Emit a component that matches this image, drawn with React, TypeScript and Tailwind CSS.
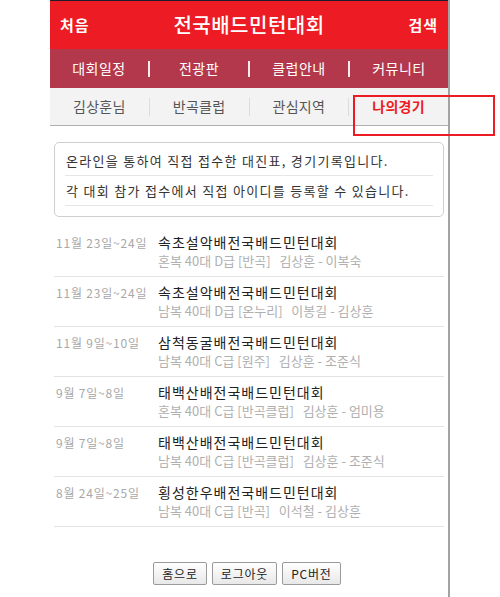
import React from "react";

const menu = ["대회일정", "전광판", "클럽안내", "커뮤니티"];
const tabs = [
  { label: "김상훈님" },
  { label: "반곡클럽" },
  { label: "관심지역" },
  { label: "나의경기", active: true },
];

const games = [
  { date: "11월 23일~24일", title: "속초설악배전국배드민턴대회", info: "혼복 40대 D급 [반곡]   김상훈 - 이복숙" },
  { date: "11월 23일~24일", title: "속초설악배전국배드민턴대회", info: "남복 40대 D급 [온누리]   이봉길 - 김상훈" },
  { date: "11월 9일~10일", title: "삼척동굴배전국배드민턴대회", info: "남복 40대 C급 [원주]   김상훈 - 조준식" },
  { date: "9월 7일~8일", title: "태백산배전국배드민턴대회", info: "혼복 40대 C급 [반곡클럽]   김상훈 - 엄미용" },
  { date: "9월 7일~8일", title: "태백산배전국배드민턴대회", info: "남복 40대 C급 [반곡클럽]   김상훈 - 조준식" },
  { date: "8월 24일~25일", title: "횡성한우배전국배드민턴대회", info: "남복 40대 C급 [반곡]   이석철 - 김상훈" },
];

export default function App() {
  return (
    <div className="relative min-h-[597px] w-[500px] bg-white font-['Noto_Sans_CJK_KR','Noto_Sans',sans-serif]">
      <div className="ml-[50px] flex min-h-[597px] w-[400px] flex-col border-r-2 border-[#a3a3a3]">
        {/* top bar */}
        <div className="h-[1px] bg-[#1c1c2a]" />
        <header className="flex h-[48px] items-center justify-between bg-[#ed1c24] px-[10px] text-white">
          <span className="text-[15px] font-bold tracking-[1px]">처음</span>
          <h1 className="text-[20px] font-medium tracking-[0.5px]">전국배드민턴대회</h1>
          <span className="text-[15px] font-bold tracking-[1px]">검색</span>
        </header>

        {/* main menu */}
        <nav className="flex h-[39px] items-center bg-[#b4384b] text-[14px] tracking-[0.5px] text-white">
          {menu.map((m, i) => (
            <React.Fragment key={m}>
              <span className="flex-1 text-center">{m}</span>
              {i < menu.length - 1 && <span className="h-[16px] w-[2px] bg-white/90" />}
            </React.Fragment>
          ))}
        </nav>

        {/* sub tabs */}
        <div className="flex h-[38px] items-center border-b border-[#b0b0b0] bg-[#f3f3f3] text-[14px] tracking-[0.3px] text-[#555]">
          {tabs.map((t, i) => (
            <React.Fragment key={t.label}>
              <span className={t.active ? "flex-1 text-center font-bold text-[#ed1c24]" : "flex-1 text-center"}>
                {t.label}
              </span>
              {i < tabs.length - 1 && <span className="h-[18px] w-px bg-[#dcdcdc]" />}
            </React.Fragment>
          ))}
        </div>

        {/* notice */}
        <div className="mx-[4px] mt-[16px] rounded-[5px] border border-[#cfcfcf] px-[10px] pb-[10px] pt-[8px] text-[13px] leading-[19px] tracking-[1.3px] text-[#333]">
          <p className="border-b border-[#e6e6e6] px-[1px] pb-[5px]">온라인을 통하여 직접 접수한 대진표, 경기기록입니다.</p>
          <p className="border-b border-[#e6e6e6] px-[1px] py-[5px]">각 대회 참가 접수에서 직접 아이디를 등록할 수 있습니다.</p>
        </div>

        {/* game list */}
        <ul className="mx-[4px] mt-[10px]">
          {games.map((g, i) => (
            <li key={i} className="flex h-[50px] border-b border-[#e3e3e3] pt-[5px]">
              <span className="w-[104px] pl-[2px] pt-[2px] text-[12px] tracking-[0.8px] text-[#a8a8a8]">{g.date}</span>
              <div className="flex flex-col">
                <span className="text-[14px] leading-[20px] tracking-[1px] text-[#222]">{g.title}</span>
                <span className="whitespace-pre text-[13px] leading-[18px] text-[#b0b0b0]">{g.info}</span>
              </div>
            </li>
          ))}
        </ul>

        {/* footer buttons */}
        <div className="mt-[35px] flex justify-center gap-[5px] pr-[4px] text-[12px] tracking-[0.8px] text-[#222]">
          <button className="h-[23px] rounded-[2px] border border-[#9a9a9a] bg-gradient-to-b from-white to-[#e8e8e8] px-[8px]">홈으로</button>
          <button className="h-[23px] rounded-[2px] border border-[#9a9a9a] bg-gradient-to-b from-white to-[#e8e8e8] px-[8px]">로그아웃</button>
          <button className="h-[23px] rounded-[2px] border border-[#9a9a9a] bg-gradient-to-b from-white to-[#e8e8e8] px-[8px]">PC버전</button>
        </div>
      </div>

      {/* highlight box */}
      <div className="absolute left-[353px] top-[95px] h-[41px] w-[142px] border-2 border-[#ed1c24]" />
    </div>
  );
}
